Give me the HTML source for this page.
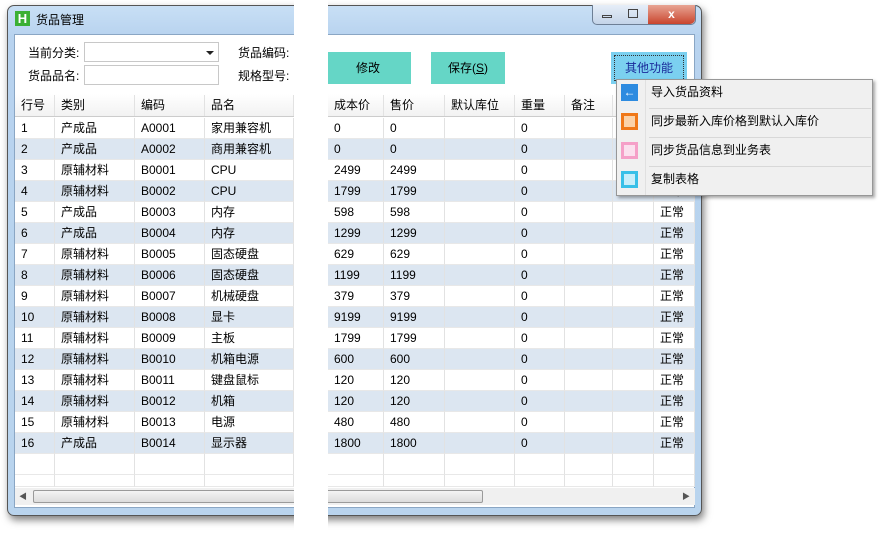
<!DOCTYPE html><html><head><meta charset="utf-8"><style>
*{margin:0;padding:0;box-sizing:border-box}
body{width:881px;height:537px;background:#fff;position:relative;overflow:hidden;font-family:"Liberation Sans","Noto Sans CJK SC",sans-serif;font-size:12px;color:#000}
.a{position:absolute}
.win{left:7px;top:5px;width:695px;height:511px;border-radius:7px;background:linear-gradient(#c8dff5,#b8d3ef 30px,#b9d4ee);border:1px solid #555;box-shadow:2px 4px 8px rgba(0,0,0,.5)}
.client{left:14px;top:34px;width:681px;height:474px;background:#fff;border:1px solid #8aa6c4}
.cell{position:absolute;height:21px;line-height:21px;padding-left:6px;white-space:nowrap;border-right:1px solid #e2e2e2;border-bottom:1px solid #e8e8e8}
.btn{position:absolute;background:#65d6c6;text-align:center;line-height:33px;font-size:12px}
.mi{position:absolute;left:0;width:257px;height:29px;line-height:25px;padding-left:34px}
</style></head><body>
<div class="a win"></div>
<div class="a" style="left:15px;top:11px;width:15px;height:15px;background:#3bb033;color:#fff;font-weight:bold;font-size:13px;line-height:15px;text-align:center">H</div>
<div class="a" style="left:36px;top:11px;font-size:12px">货品管理</div>
<div class="a" style="left:592px;top:5px;width:104px;height:20px;border:1px solid #6d7f95;border-top:none;border-radius:0 0 5px 5px;background:linear-gradient(#e6eef8,#c4d4e8)"></div>
<div class="a" style="left:648px;top:5px;width:47px;height:19px;border-radius:0 0 5px 0;background:linear-gradient(#e8a594,#c9452e);color:#fff;text-align:center;font-weight:bold;line-height:18px">x</div>
<div class="a" style="left:602px;top:15px;width:10px;height:3px;border:1px solid #444"></div>
<div class="a" style="left:628px;top:9px;width:10px;height:9px;border:1px solid #444"></div>
<div class="a client"></div>
<div class="a" style="left:28px;top:44px">当前分类:</div>
<div class="a" style="left:84px;top:42px;width:135px;height:20px;border:1px solid #c8c8c8"></div>
<div class="a" style="left:206px;top:51px;border:4px solid transparent;border-top:4px solid #222"></div>
<div class="a" style="left:28px;top:67px">货品品名:</div>
<div class="a" style="left:84px;top:65px;width:135px;height:20px;border:1px solid #c8c8c8"></div>
<div class="a" style="left:238px;top:44px">货品编码:</div>
<div class="a" style="left:238px;top:67px">规格型号:</div>
<div class="btn" style="left:325px;top:52px;width:86px;height:32px">修改</div>
<div class="btn" style="left:431px;top:52px;width:74px;height:32px">保存(<u>S</u>)</div>
<div class="btn" style="left:611px;top:52px;width:76px;height:32px;background:#7bd0f0;color:#1a2a9a"><div style="position:absolute;inset:3px;border:1px dotted #333"></div>其他功能</div>
<div class="a" style="left:15px;top:94px;width:680px;height:23px;background:linear-gradient(#fff,#f2f2f2);border-bottom:1px solid #ccc"></div>
<div id="g"></div>
<div class="a" style="left:15px;top:488px;width:680px;height:17px;background:#f0f0f0"></div>
<div class="a" style="left:33px;top:490px;width:450px;height:13px;border:1px solid #9a9a9a;border-radius:2px;background:linear-gradient(#f4f4f4,#dcdcdc)"></div>
<div class="a" style="left:19px;top:491px;font-size:8px;color:#555">◀</div>
<div class="a" style="left:682px;top:491px;font-size:8px;color:#555">▶</div>
<div class="a" style="left:294px;top:0;width:34px;height:537px;background:#fff"></div>
<div class="a" style="left:616px;top:79px;width:257px;height:117px;background:#f0f0f0;border:1px solid #979797;box-shadow:2px 2px 3px rgba(0,0,0,.35)">
<div class="a" style="left:28px;top:0;width:1px;height:115px;background:#e0e0e0"></div>
<div class="mi" style="top:0">导入货品资料</div>
<div class="mi" style="top:29px">同步最新入库价格到默认入库价</div>
<div class="mi" style="top:58px">同步货品信息到业务表</div>
<div class="mi" style="top:87px">复制表格</div>
<div class="a" style="left:32px;top:28px;width:222px;height:1px;background:#d8d8d8"></div>
<div class="a" style="left:32px;top:57px;width:222px;height:1px;background:#d8d8d8"></div>
<div class="a" style="left:32px;top:86px;width:222px;height:1px;background:#d8d8d8"></div>
<div class="a" style="left:4px;top:4px;width:17px;height:17px;background:#2d8be0;color:#fff;font-size:12px;line-height:16px;text-align:center">←</div>
<div class="a" style="left:4px;top:33px;width:17px;height:17px;border:3px solid #f07818;background:#fbd2a8"></div>
<div class="a" style="left:4px;top:62px;width:17px;height:17px;border:3px solid #f5a0c8;background:#fbe0ee"></div>
<div class="a" style="left:4px;top:91px;width:17px;height:17px;border:3px solid #38c0e8;background:#c8eefa"></div>
</div>
<script>
var cols=[[15,40],[55,80],[135,70],[205,89],[328,56],[384,61],[445,70],[515,50],[565,48],[613,41],[654,41]];
var hd=["行号","类别","编码","品名","成本价","售价","默认库位","重量","备注","",""];
var d=[["1","产成品","A0001","家用兼容机","0","0"],["2","产成品","A0002","商用兼容机","0","0"],["3","原辅材料","B0001","CPU","2499","2499"],["4","原辅材料","B0002","CPU","1799","1799"],["5","产成品","B0003","内存","598","598"],["6","产成品","B0004","内存","1299","1299"],["7","原辅材料","B0005","固态硬盘","629","629"],["8","原辅材料","B0006","固态硬盘","1199","1199"],["9","原辅材料","B0007","机械硬盘","379","379"],["10","原辅材料","B0008","显卡","9199","9199"],["11","原辅材料","B0009","主板","1799","1799"],["12","原辅材料","B0010","机箱电源","600","600"],["13","原辅材料","B0011","键盘鼠标","120","120"],["14","原辅材料","B0012","机箱","120","120"],["15","原辅材料","B0013","电源","480","480"],["16","产成品","B0014","显示器","1800","1800"]];
var h="";
cols.forEach(function(c,i){h+='<div class="cell" style="left:'+c[0]+'px;top:95px;width:'+c[1]+'px;border-bottom:none">'+hd[i]+'</div>';});
for(var r=0;r<18;r++){var y=118+r*21,row=d[r],bg=(r%2==1&&r<16)?"#dce6f1":"#fff";
cols.forEach(function(c,i){var t="";if(row){if(i<6)t=row[i];else if(i==7)t="0";else if(i==10)t="正常";}
h+='<div class="cell" style="left:'+c[0]+'px;top:'+y+'px;width:'+c[1]+'px;background:'+bg+(r>=16?';height:'+(r==16?21:12)+'px':'')+'">'+t+'</div>';});}
document.getElementById("g").innerHTML=h;
</script>
</body></html>
